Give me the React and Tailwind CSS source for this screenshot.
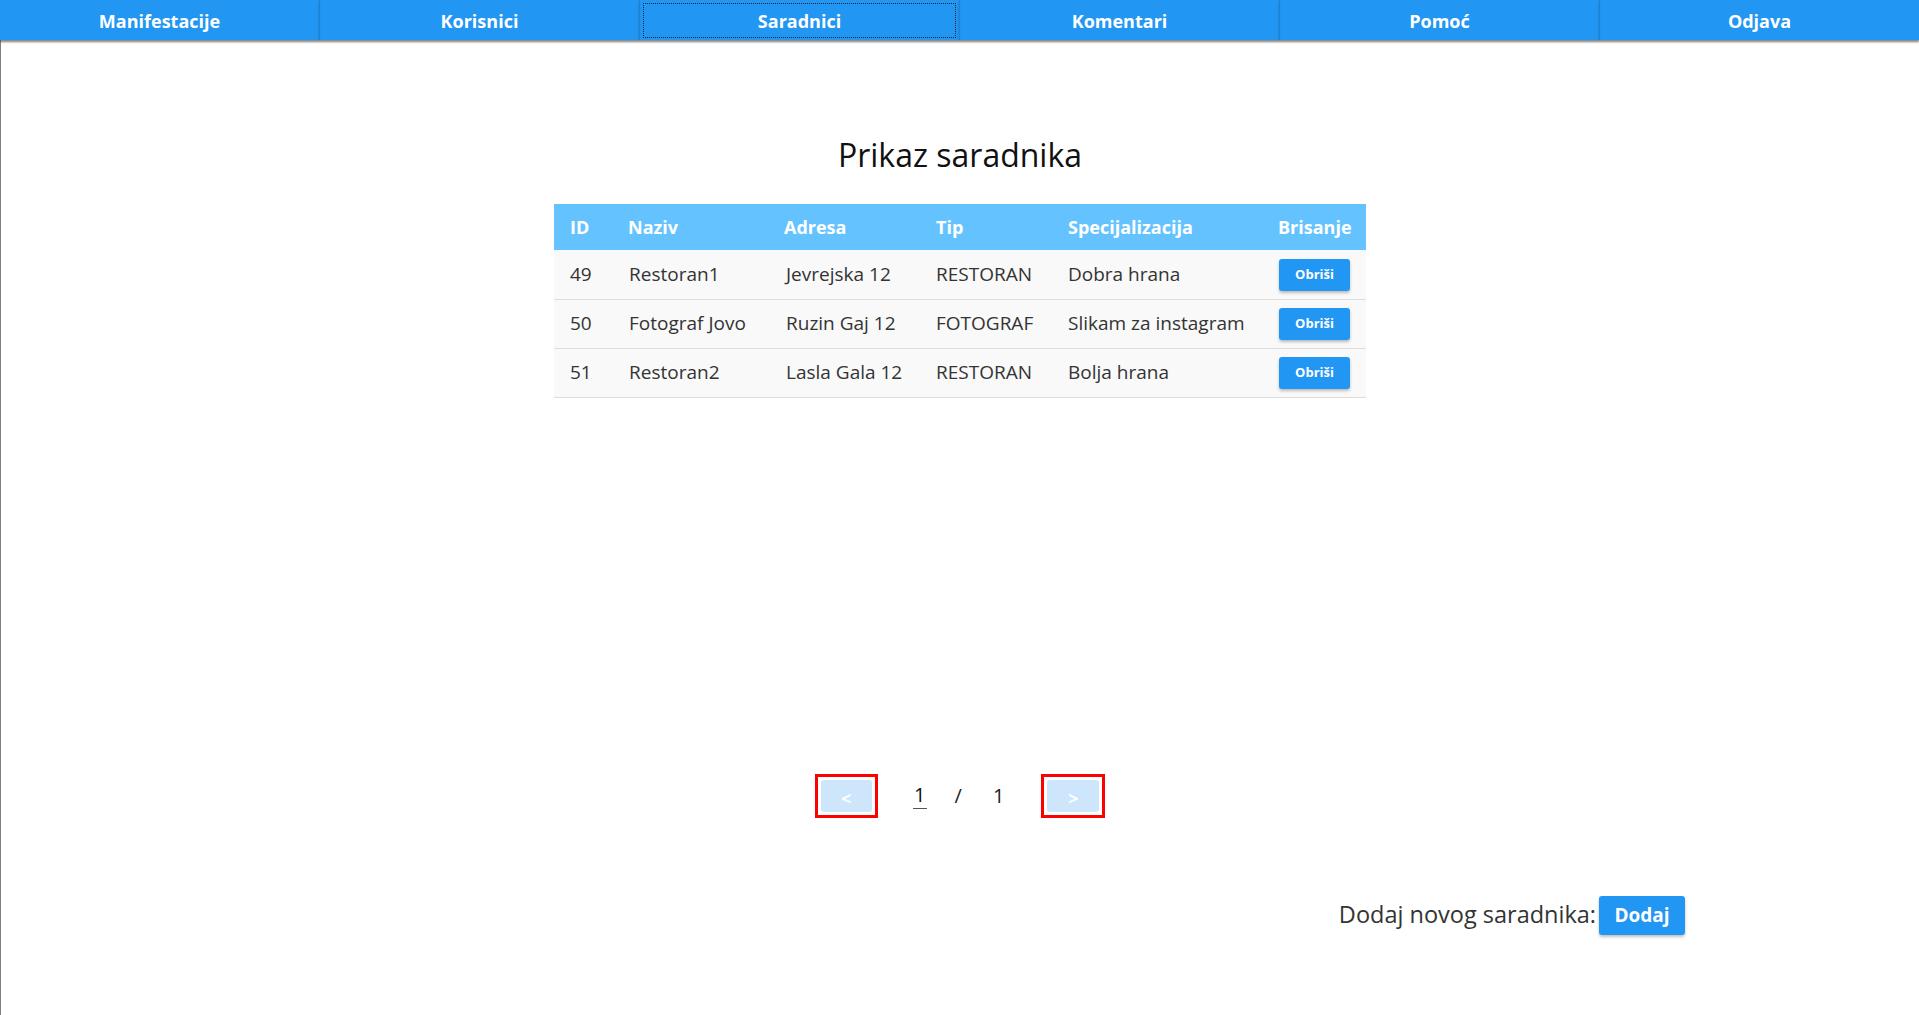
const navItems = ['Manifestacije', 'Korisnici', 'Saradnici', 'Komentari', 'Pomoć', 'Odjava'];

const saradnici = [
  { id: 49, naziv: 'Restoran1', adresa: 'Jevrejska 12', tip: 'RESTORAN', spec: 'Dobra hrana' },
  { id: 50, naziv: 'Fotograf Jovo', adresa: 'Ruzin Gaj 12', tip: 'FOTOGRAF', spec: 'Slikam za instagram' },
  { id: 51, naziv: 'Restoran2', adresa: 'Lasla Gala 12', tip: 'RESTORAN', spec: 'Bolja hrana' },
];

export default function App() {
  return (
    <div className="min-h-[1015px] bg-white font-['Open_Sans','Segoe_UI',sans-serif] flex flex-col">
      {/* Top navigation */}
      <nav className="flex h-10 bg-[#2196f3] shadow-[0_2px_2px_rgba(0,0,0,0.3)] relative z-10">
        {navItems.map((item) => (
          <button
            key={item}
            className="flex-1 relative flex items-center justify-center pt-[3px] text-white font-bold text-[18px] border-l border-[#1b82d6] first:border-l-0 shadow-[0_2px_2px_rgba(0,0,0,0.25)]"
          >
            {item === 'Saradnici' && (
              <span className="absolute inset-x-[3px] top-[3px] bottom-[2px] border border-dotted border-[#222]" />
            )}
            <span className="relative">{item}</span>
          </button>
        ))}
      </nav>

      <main className="flex-1 flex flex-col border-l border-[#808080]">
        {/* Title */}
        <h2 className="mt-[94px] text-center text-[32px] leading-[42px] text-[#111]">Prikaz saradnika</h2>

        {/* Table */}
        <div className="mt-[28px] flex justify-center">
          <table className="w-[812px] border-collapse text-left">
            <thead>
              <tr className="bg-[#64c3ff] h-[46px] text-white text-[18px] font-bold">
                <th className="w-[58px] pl-4 font-bold">ID</th>
                <th className="w-[156px] pl-4 font-bold">Naziv</th>
                <th className="w-[152px] pl-4 font-bold">Adresa</th>
                <th className="w-[132px] pl-4 font-bold">Tip</th>
                <th className="w-[212px] pl-4 font-bold">Specijalizacija</th>
                <th className="pl-[14px] font-bold">Brisanje</th>
              </tr>
            </thead>
            <tbody>
              {saradnici.map((s) => (
                <tr key={s.id} className="h-[49px] bg-[#f9f9f9] border-b border-[#dddddd] text-[19px] text-[#333]">
                  <td className="pl-4">{s.id}</td>
                  <td className="pl-[17px]">{s.naziv}</td>
                  <td className="pl-[18px]">{s.adresa}</td>
                  <td className="pl-4">{s.tip}</td>
                  <td className="pl-4">{s.spec}</td>
                  <td className="pl-[15px]">
                    <button className="w-[71px] h-8 rounded-[3px] bg-[#2196f3] text-white text-[13px] font-bold shadow-[0_2px_3px_rgba(0,0,0,0.25)]">
                      Obriši
                    </button>
                  </td>
                </tr>
              ))}
            </tbody>
          </table>
        </div>

        {/* Pagination */}
        <div className="mt-[376px] flex items-center justify-center">
          <div className="border-[3px] border-[#ff0000] p-[3px]">
            <button className="w-[51px] h-8 rounded-[3px] bg-[#cde6fb] text-white text-[18px] font-bold leading-none pt-1">&lt;</button>
          </div>
          <div className="ml-[35px] w-[14px] border-b border-[#555] text-[20px] leading-[26px] text-[#111] text-center">1</div>
          <span className="ml-[28px] text-[20px] text-[#222]">/</span>
          <span className="ml-[31px] text-[20px] text-[#222]">1</span>
          <div className="ml-[37px] border-[3px] border-[#ff0000] p-[3px]">
            <button className="w-[52px] h-8 rounded-[3px] bg-[#cde6fb] text-white text-[18px] font-bold leading-none pt-1">&gt;</button>
          </div>
        </div>

        {/* Add new */}
        <div className="mt-[78px] flex items-center justify-end pr-[234px]">
          <span className="text-[23.5px] text-[#333]">Dodaj novog saradnika:</span>
          <button className="ml-[3px] w-[86px] h-[39px] rounded-[3px] bg-[#2196f3] text-white text-[19px] font-bold shadow-[0_2px_3px_rgba(0,0,0,0.25)]">
            Dodaj
          </button>
        </div>
      </main>
    </div>
  );
}
